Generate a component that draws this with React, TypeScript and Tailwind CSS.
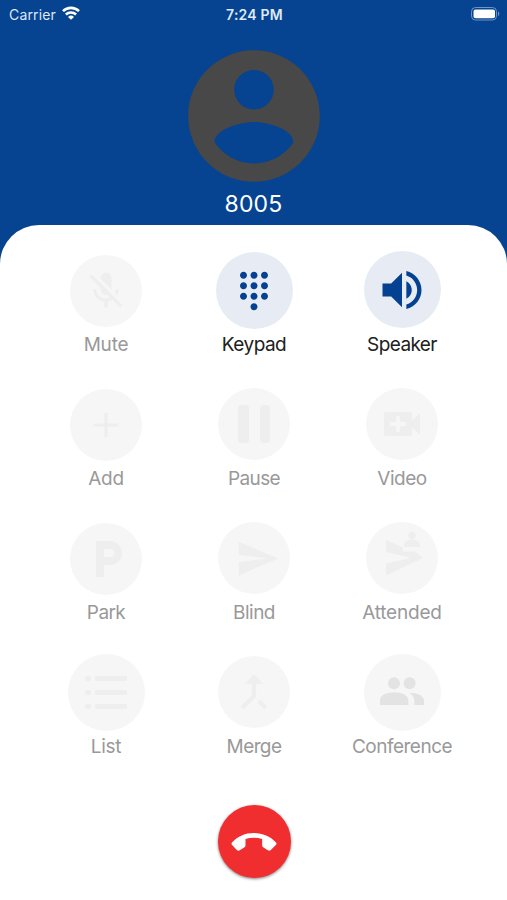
import type { ReactNode } from "react";

type Action = {
  label: string;
  labelClass: string;
  circleClass: string;
  active?: boolean;
  icon: ReactNode;
};

function Glyph({ d, className }: { d: string; className: string }) {
  return (
    <svg viewBox="0 0 24 24" className={`shrink-0 fill-current ${className}`} aria-hidden="true">
      <path d={d} />
    </svg>
  );
}

const MIC_OFF =
  "M19 11h-1.7c0 .74-.16 1.43-.43 2.05l1.23 1.23c.56-.98.9-2.09.9-3.28zm-4.02.17c0-.06.02-.11.02-.17V5c0-1.66-1.34-3-3-3S9 3.34 9 5v.18l5.98 5.99zM4.27 3L3 4.27l6.01 6.01V11c0 1.66 1.33 3 2.99 3 .22 0 .44-.03.65-.08l1.66 1.66c-.71.33-1.5.52-2.31.52-2.76 0-5.3-2.1-5.3-5.1H5c0 3.41 2.72 6.23 6 6.72V21h2v-3.28c.91-.13 1.77-.45 2.54-.9L19.73 21 21 19.73 4.27 3z";
const DIALPAD =
  "M12 19c-1.1 0-2 .9-2 2s.9 2 2 2 2-.9 2-2-.9-2-2-2zM6 1c-1.1 0-2 .9-2 2s.9 2 2 2 2-.9 2-2-.9-2-2-2zm0 6c-1.1 0-2 .9-2 2s.9 2 2 2 2-.9 2-2-.9-2-2-2zm0 6c-1.1 0-2 .9-2 2s.9 2 2 2 2-.9 2-2-.9-2-2-2zm12-8c1.1 0 2-.9 2-2s-.9-2-2-2-2 .9-2 2 .9 2 2 2zm-6 8c-1.1 0-2 .9-2 2s.9 2 2 2 2-.9 2-2-.9-2-2-2zm6 0c-1.1 0-2 .9-2 2s.9 2 2 2 2-.9 2-2-.9-2-2-2zm0-6c-1.1 0-2 .9-2 2s.9 2 2 2 2-.9 2-2-.9-2-2-2zm-6 0c-1.1 0-2 .9-2 2s.9 2 2 2 2-.9 2-2-.9-2-2-2zm0-6c-1.1 0-2 .9-2 2s.9 2 2 2 2-.9 2-2-.9-2-2-2z";
const VOLUME =
  "M3 9v6h4l5 5V4L7 9H3zm13.5 3c0-1.77-1.02-3.29-2.5-4.03v8.05c1.48-.73 2.5-2.25 2.5-4.02zM14 3.23v2.06c2.89.86 5 3.54 5 6.71s-2.11 5.85-5 6.71v2.06c4.01-.91 7-4.49 7-8.77s-2.99-7.86-7-8.77z";
const PLUS = "M19 12.9h-6.1V19h-1.8v-6.1H5v-1.8h6.1V5h1.8v6.1H19z";
const VIDEO =
  "M17 10.5V7c0-.55-.45-1-1-1H4c-.55 0-1 .45-1 1v10c0 .55.45 1 1 1h12c.55 0 1-.45 1-1v-3.5l4 4v-11l-4 4zM14 13h-3v3H9v-3H6v-2h3V8h2v3h3v2z";
const PARKING =
  "M13 3H6v18h4v-6h3c3.31 0 6-2.69 6-6s-2.69-6-6-6zm.2 8H10V7h3.2c1.1 0 2 .9 2 2s-.9 2-2 2z";
const SEND = "M2.01 21L23 12 2.01 3 2 10l15 2-15 2z";
const MERGE =
  "M17 20.41L18.41 19 15 15.59 13.59 17 17 20.41zM7.5 8H11v5.59L5.59 19 7 20.41l6-6V8h3.5L12 3.5 7.5 8z";
const ACCOUNT =
  "M12 2C6.48 2 2 6.48 2 12s4.48 10 10 10 10-4.48 10-10S17.52 2 12 2zm0 3c1.66 0 3 1.34 3 3s-1.34 3-3 3-3-1.34-3-3 1.34-3 3-3zm0 14.2c-2.5 0-4.71-1.28-6-3.22.03-1.99 4-3.08 6-3.08 1.99 0 5.97 1.09 6 3.08-1.29 1.94-3.5 3.22-6 3.22z";

const actions: Action[] = [
  {
    label: "Mute",
    labelClass: "tracking-[-0.2px]",
    circleClass: "mt-[5px] size-[72px]",
    icon: <Glyph d={MIC_OFF} className="size-[44px]" />,
  },
  {
    label: "Keypad",
    labelClass: "tracking-[-0.5px]",
    circleClass: "mt-[2px] size-[77px]",
    active: true,
    icon: <Glyph d={DIALPAD} className="size-[42px]" />,
  },
  {
    label: "Speaker",
    labelClass: "tracking-[-0.6px]",
    circleClass: "mt-[1px] size-[77px]",
    active: true,
    icon: <Glyph d={VOLUME} className="size-[52px]" />,
  },
  {
    label: "Add",
    labelClass: "tracking-[-0.3px]",
    circleClass: "mt-[5px] size-[72px]",
    icon: <Glyph d={PLUS} className="size-[42px]" />,
  },
  {
    label: "Pause",
    labelClass: "tracking-[-0.6px]",
    circleClass: "mt-[4px] size-[72px]",
    icon: (
      <span className="flex gap-[11px]">
        <span className="h-[38px] w-[10.5px] rounded-[3px] bg-current" />
        <span className="h-[38px] w-[10.5px] rounded-[3px] bg-current" />
      </span>
    ),
  },
  {
    label: "Video",
    labelClass: "tracking-[-0.5px]",
    circleClass: "mt-[4px] size-[72px]",
    icon: <Glyph d={VIDEO} className="size-[48px]" />,
  },
  {
    label: "Park",
    labelClass: "tracking-[-0.6px]",
    circleClass: "mt-[5px] size-[72px]",
    icon: <Glyph d={PARKING} className="ml-1 size-[48px]" />,
  },
  {
    label: "Blind",
    labelClass: "tracking-[-0.5px]",
    circleClass: "mt-[4px] size-[72px]",
    icon: <Glyph d={SEND} className="ml-1.5 size-[45px]" />,
  },
  {
    label: "Attended",
    labelClass: "tracking-[-0.2px]",
    circleClass: "mt-[4px] size-[72px]",
    icon: (
      <svg viewBox="0 0 72 72" className="size-[72px] fill-current" aria-hidden="true">
        <path d="M20 18 37 25.500v4H49l8 6.500L20 53.500V41.500L45 36 20 30z" />
        <circle cx="46" cy="13.500" r="3.700" />
        <path d="M38 25v-3c0-3 4-4.500 8-4.500s8 1.500 8 4.500v3z" />
      </svg>
    ),
  },
  {
    label: "List",
    labelClass: "tracking-[-0.3px]",
    circleClass: "mt-[2px] size-[77px]",
    icon: (
      <span className="flex flex-col gap-[9px]">
        {[0, 1, 2].map((row) => (
          <span key={row} className="flex gap-1">
            <span className="h-[5px] w-[6px] rounded-[2px] bg-current" />
            <span className="h-[5px] w-[32px] rounded-[1px] bg-current" />
          </span>
        ))}
      </span>
    ),
  },
  {
    label: "Merge",
    labelClass: "tracking-[-0.6px]",
    circleClass: "mt-[4px] size-[72px]",
    icon: <Glyph d={MERGE} className="size-[50px]" />,
  },
  {
    label: "Conference",
    labelClass: "tracking-[-0.5px]",
    circleClass: "mt-[2px] size-[77px] text-[#e3e3e3]",
    icon: (
      <svg viewBox="0 0 132 84" className="-mt-[3px] h-[28px] w-[44px] fill-current" aria-hidden="true">
        <circle cx="42" cy="19" r="18" />
        <circle cx="89" cy="19" r="18" />
        <path d="M0 84V70c0-16 20-24 42-24s43 8 43 24v14z" />
        <path d="M89 47c23 0 43 8 43 24v13h-29V71c0-10-5-17-14-24z" />
      </svg>
    ),
  },
];

function StatusBar() {
  return (
    <div className="grid h-[28px] grid-cols-3 items-center pr-[6px] pl-[9px] font-['Inter',sans-serif] text-[14px] text-[#dfe9f8]">
      <div className="flex items-center gap-[6px]">
        <span className="tracking-[0.15px]">Carrier</span>
        <svg viewBox="0 0 18 14" className="-mt-[2px] h-[14px] w-[18px] fill-none stroke-white" aria-hidden="true">
          <path d="M1 5.100a11.500 11.500 0 0 1 16 0M3.900 8.500a7.400 7.400 0 0 1 10.200 0" strokeWidth="2.600" />
          <path d="M9 13.800 6 10.900a4.300 4.300 0 0 1 6 0z" className="fill-white stroke-none" />
        </svg>
      </div>
      <span className="pr-px text-center text-[14px] font-semibold tracking-[0.2px]">7:24 PM</span>
      <svg viewBox="0 0 31 15" className="-mt-[2px] h-[15px] w-[31px] justify-self-end" aria-hidden="true">
        <rect x="1.500" y="1.500" width="25" height="12.500" rx="4" className="fill-none stroke-[#6f96c8]" />
        <rect x="3.500" y="3.500" width="21.500" height="8.700" rx="2" className="fill-white" />
        <path d="M28 5.500c1.700.6 1.700 3.900 0 4.500z" className="fill-[#6f96c8]" />
      </svg>
    </div>
  );
}

function ActionButton({ action }: { action: Action }) {
  const tone = action.active ? "bg-[#e6ebf4] text-[#054191]" : "bg-[#f6f6f6]";
  const ink = action.active ? "text-[#202020]" : "text-[#999999]";
  return (
    <button className="flex h-[134px] flex-col items-center text-[#eeeeee]">
      <span className="flex h-[81px] items-start">
        <span className={`flex items-center justify-center rounded-full ${action.circleClass} ${tone}`}>
          {action.icon}
        </span>
      </span>
      <span className={`text-[19px] leading-[28px] ${ink} ${action.labelClass}`}>{action.label}</span>
    </button>
  );
}

export default function App() {
  return (
    <main className="flex h-[900px] w-[507px] flex-col overflow-hidden bg-[#064390] font-['Inter',sans-serif]">
      <StatusBar />
      <header className="flex h-[197px] flex-col items-center">
        <Glyph d={ACCOUNT} className="mt-[9px] size-[158px] text-[#484848]" />
        <h1 className="-mt-[5px] text-[23px] leading-[28px] tracking-[0.2px] text-white">8005</h1>
      </header>
      <section className="flex flex-1 flex-col items-center rounded-t-[39px] bg-white pt-[25px]">
        <div className="ml-px grid w-[444px] grid-cols-3">
          {actions.map((action) => (
            <ActionButton key={action.label} action={action} />
          ))}
        </div>
        <button
          aria-label="End call"
          className="mt-[19px] ml-px flex size-[73px] items-center justify-center rounded-full bg-[#f02e30] shadow-[0_1px_3px_rgba(0,0,0,0.5)]"
        >
          <svg viewBox="0 0 137 54" className="h-[18px] w-[46px] fill-white" aria-hidden="true">
            <path d="M3 28C20 10 42 0 68 0s49 10 66 28q4 4 0 8l-15 15q-4 4-9 1L96 43q-3-2-3-6V18Q68 11 43 18v19q0 4-3 6l-14 9q-5 3-9-1L3 36q-4-4 0-8z" />
          </svg>
        </button>
      </section>
    </main>
  );
}
